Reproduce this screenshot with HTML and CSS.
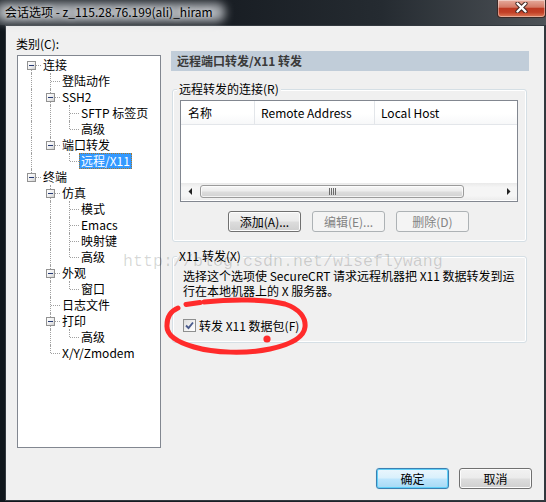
FILE: index.html
```html
<!DOCTYPE html>
<html lang="zh-CN">
<head>
<meta charset="utf-8">
<title>会话选项</title>
<link rel="stylesheet" href="styles.css">
</head>
<body>
<div class="window">
  <div class="titlebar">
    <div class="title">会话选项 - z_115.28.76.199(ali)_hiram</div>
    <div class="close">
      <svg width="13" height="11" viewBox="0 0 13 11"><path d="M2.5 1.5 L10.5 9.5 M10.5 1.5 L2.5 9.5" stroke="#3b2420" stroke-width="4.2" stroke-linecap="round" fill="none"/><path d="M2.5 1.5 L10.5 9.5 M10.5 1.5 L2.5 9.5" stroke="#fff" stroke-width="2.4" stroke-linecap="round" fill="none"/></svg>
    </div>
  </div>
  <div class="client">
    <div class="main">
      <div class="left">
        <div class="cat-label">类别(C):</div>
        <div class="tree">
          <div class="row"><span class="cell top"><i class="box"></i></span><span class="lbl">连接</span></div>
          <div class="row"><span class="cell pipe"></span><span class="cell tee"></span><span class="lbl">登陆动作</span></div>
          <div class="row"><span class="cell pipe"></span><span class="cell tee"><i class="box"></i></span><span class="lbl">SSH2</span></div>
          <div class="row"><span class="cell pipe"></span><span class="cell pipe"></span><span class="cell tee"></span><span class="lbl">SFTP 标签页</span></div>
          <div class="row"><span class="cell pipe"></span><span class="cell pipe"></span><span class="cell end"></span><span class="lbl">高级</span></div>
          <div class="row"><span class="cell pipe"></span><span class="cell end"><i class="box"></i></span><span class="lbl">端口转发</span></div>
          <div class="row"><span class="cell pipe"></span><span class="cell"></span><span class="cell end"></span><span class="lbl sel">远程/X11</span></div>
          <div class="row"><span class="cell end"><i class="box"></i></span><span class="lbl">终端</span></div>
          <div class="row"><span class="cell"></span><span class="cell tee"><i class="box"></i></span><span class="lbl">仿真</span></div>
          <div class="row"><span class="cell"></span><span class="cell pipe"></span><span class="cell tee"></span><span class="lbl">模式</span></div>
          <div class="row"><span class="cell"></span><span class="cell pipe"></span><span class="cell tee"></span><span class="lbl">Emacs</span></div>
          <div class="row"><span class="cell"></span><span class="cell pipe"></span><span class="cell tee"></span><span class="lbl">映射键</span></div>
          <div class="row"><span class="cell"></span><span class="cell pipe"></span><span class="cell end"></span><span class="lbl">高级</span></div>
          <div class="row"><span class="cell"></span><span class="cell tee"><i class="box"></i></span><span class="lbl">外观</span></div>
          <div class="row"><span class="cell"></span><span class="cell pipe"></span><span class="cell end"></span><span class="lbl">窗口</span></div>
          <div class="row"><span class="cell"></span><span class="cell tee"></span><span class="lbl">日志文件</span></div>
          <div class="row"><span class="cell"></span><span class="cell tee"><i class="box"></i></span><span class="lbl">打印</span></div>
          <div class="row"><span class="cell"></span><span class="cell pipe"></span><span class="cell end"></span><span class="lbl">高级</span></div>
          <div class="row"><span class="cell"></span><span class="cell end"></span><span class="lbl">X/Y/Zmodem</span></div>
        </div>
      </div>
      <div class="right">
        <div class="page-title">远程端口转发/X11 转发</div>
        <div class="group g1">
          <div class="legend">远程转发的连接(R)</div>
          <div class="listview">
            <div class="lv-header">
              <div class="col c1">名称</div>
              <div class="col c2">Remote Address</div>
              <div class="col c3">Local Host</div>
            </div>
            <div class="lv-body"></div>
            <div class="hscroll">
              <div class="sb-arrow"><svg width="4" height="7" viewBox="0 0 4 7"><path d="M4 0 L0.5 3.5 L4 7 Z" fill="#222"/></svg></div>
              <div class="sb-thumb">
                <svg width="7" height="7" viewBox="0 0 7 7"><path d="M0.5 0 V7 M2.5 0 V7 M4.5 0 V7 M6.5 0 V7" stroke="#6b6b6b" stroke-width="1"/></svg>
              </div>
              <div class="sb-track"></div>
              <div class="sb-arrow"><svg width="4" height="7" viewBox="0 0 4 7"><path d="M0 0 L3.5 3.5 L0 7 Z" fill="#222"/></svg></div>
            </div>
          </div>
          <div class="btn-row">
            <button class="btn">添加(A)...</button>
            <button class="btn disabled">编辑(E)...</button>
            <button class="btn disabled">删除(D)</button>
          </div>
        </div>
        <div class="group g2">
          <div class="legend">X11 转发(X)</div>
          <p class="desc">选择这个选项使 SecureCRT 请求远程机器把 X11 数据转发到运行在本地机器上的 X 服务器。</p>
          <label class="check"><span class="cb"><svg width="11" height="11" viewBox="0 0 11 11"><path d="M2 5.5 L4.5 8 L9 2.5" stroke="#4a5b8c" stroke-width="1.9" fill="none"/></svg></span>转发 X11 数据包(F)</label>
        </div>
      </div>
    </div>
    <div class="footer">
      <button class="btn default">确定</button>
      <button class="btn">取消</button>
    </div>
  </div>
  <div class="watermark">http://blog.csdn.net/wiseflywang</div>
  <svg class="annot" width="546" height="502" viewBox="0 0 546 502">
    <path d="M186 304.5 L200 302.5" stroke="#ff2b2b" stroke-width="5" stroke-linecap="round" fill="none"/>
    <path d="M204 302 C232 299 266 299 285 304 C300 309 306 318 305 327 C304 337 293 344 270 349 C246 354 214 353 194 347 C176 342 166 335 167 325 C167 317 171 311 178 308" stroke="#ff2b2b" stroke-width="5" stroke-linecap="round" fill="none"/>
    <circle cx="267" cy="339" r="3.6" fill="#ff2b2b"/>
  </svg>
</div>
</body>
</html>
```

FILE: styles.css
```css
* { box-sizing: border-box; }
html, body { margin: 0; padding: 0; }
body {
  width: 546px;
  height: 502px;
  overflow: hidden;
  background: #151b21;
  font-family: "Noto Sans CJK SC", "Noto Sans", sans-serif;
  font-size: 12px;
  color: #000;
}
.window {
  position: relative;
  width: 546px;
  height: 502px;
  display: flex;
  flex-direction: column;
  background: linear-gradient(90deg, #10161c 0%, #1d242b 60%, #30363c 100%);
}
.titlebar {
  height: 25px;
  flex: none;
  display: flex;
  justify-content: space-between;
  align-items: flex-start;
  background: linear-gradient(90deg, #262c32 0%, #181d23 40%, #252b31 70%, #4d5257 100%);
}
.title {
  position: relative;
  z-index: 0;
  height: 24px;
  line-height: 24px;
  padding: 0 14px 0 5px;
  white-space: nowrap;
  color: #000;
  text-shadow: 0 0 5px rgba(255,255,255,.8);
}
.title::before {
  content: "";
  position: absolute;
  left: -4px; right: 2px; top: 3px; bottom: 2px;
  z-index: -1;
  background: rgba(196,200,205,.85);
  border-radius: 8px;
  filter: blur(5px);
}
.close {
  width: 49px;
  height: 18px;
  border: 1px solid #3b2a27;
  border-top: none;
  border-radius: 0 0 4px 4px;
  background: linear-gradient(#e6ab9c 0%, #d47a66 42%, #bd3a22 50%, #c23f26 72%, #de7a57 100%);
  box-shadow: inset 0 0 0 1px rgba(255,255,255,.4);
  display: flex;
  justify-content: center;
  align-items: flex-start;
  padding-top: 2px;
}
.client {
  flex: 1;
  margin: 0 1px 1px 5px;
  border: 1px solid #33393f;
  background: #f0f0f0;
  display: flex;
  flex-direction: column;
}
.main {
  display: flex;
  padding: 10px 0 0 11px;
}
.left { width: 144px; flex: none; }
.cat-label { height: 19px; line-height: 15px; margin-left: -1px; }
.tree {
  height: 393px;
  border: 1px solid #828790;
  background: #fff;
  padding: 1px 0 0 4px;
}
.row { display: flex; height: 16px; }
.cell { position: relative; flex: none; width: 19px; height: 16px; }
.cell.pipe::before,
.cell.tee::before,
.cell.end::before,
.cell.top::before {
  content: "";
  position: absolute;
  left: 9px;
  top: 0;
  height: 16px;
  border-left: 1px dotted #a0a0a0;
}
.cell.end::before { height: 8px; }
.cell.top::before { top: 8px; height: 8px; }
.cell.tee::after,
.cell.end::after,
.cell.top::after {
  content: "";
  position: absolute;
  left: 10px;
  top: 8px;
  width: 9px;
  border-top: 1px dotted #a0a0a0;
}
.box {
  position: absolute;
  z-index: 1;
  left: 5px;
  top: 4px;
  width: 9px;
  height: 9px;
  border: 1px solid #929292;
  background: linear-gradient(135deg, #ffffff 0%, #eeeeee 55%, #cfcfcf 100%);
}
.box::after {
  content: "";
  position: absolute;
  left: 1px;
  top: 3px;
  width: 5px;
  height: 1px;
  background: #263a74;
}
.lbl {
  height: 16px;
  line-height: 14px;
  border: 1px solid transparent;
  padding: 0 1px;
  white-space: nowrap;
}
.lbl.sel {
  background: #3399ff;
  color: #fff;
  border: 1px dotted #a8782a;
}
.right { width: 358px; flex: none; margin-left: 10px; padding-top: 15px; }
.page-title {
  height: 20px;
  line-height: 20px;
  padding-left: 6px;
  background: #c1cdd9;
  font-weight: bold;
  color: #3a3a3a;
}
.group {
  margin-left: 1px;
  width: 355px;
  border: 1px solid #d5dfe5;
  border-radius: 3px;
  box-shadow: inset 0 0 0 1px #fff;
}
.legend {
  width: max-content;
  margin-top: -9px;
  padding: 0 2px;
  line-height: 15px;
  background: #f0f0f0;
}
.g1 { margin-top: 18px; padding: 0 0 9px 7px; }
.g1 .legend { margin-left: -3px; }
.listview {
  width: 338px;
  height: 102px;
  margin-top: 4px;
  border: 1px solid #828790;
  background: #fff;
  display: flex;
  flex-direction: column;
}
.lv-header {
  height: 24px;
  flex: none;
  display: flex;
  border-bottom: 1px solid #e3e6ea;
  background: linear-gradient(#ffffff 0%, #ffffff 55%, #f7f8f9 100%);
}
.col {
  height: 23px;
  line-height: 23px;
  padding-left: 6px;
  border-right: 1px solid #e3e6ea;
  white-space: nowrap;
}
.c1 { width: 74px; padding-left: 7px; }
.c2 { width: 120px; }
.c3 { flex: 1; border-right: none; }
.lv-body { flex: 1; }
.hscroll {
  height: 17px;
  flex: none;
  margin-bottom: 1px;
  display: flex;
  align-items: center;
  background: linear-gradient(#e9e9e9 0%, #f5f5f5 25%, #f5f5f5 75%, #ececec 100%);
}
.sb-arrow {
  width: 17px;
  height: 17px;
  flex: none;
  display: flex;
  align-items: center;
  justify-content: center;
}
.sb-thumb {
  width: 264px;
  height: 13px;
  flex: none;
  margin-left: 2px;
  border: 1px solid #9b9b9b;
  border-radius: 3px;
  background: linear-gradient(#f7f7f7 0%, #ececec 45%, #dcdcdc 55%, #d2d2d2 100%);
  box-shadow: inset 0 0 0 1px rgba(255,255,255,.7);
  display: flex;
  align-items: center;
  justify-content: center;
}
.sb-track { flex: 1; }
.btn-row { display: flex; gap: 11px; margin: 9px 0 0 48px; }
.btn {
  width: 73px;
  height: 21px;
  padding: 0;
  border: 1px solid #707070;
  border-radius: 3px;
  background: linear-gradient(#f2f2f2 0%, #ebebeb 48%, #dddddd 52%, #cfcfcf 100%);
  box-shadow: inset 0 0 0 1px #fcfcfc;
  font-family: "Noto Sans CJK SC", "Noto Sans", sans-serif;
  font-size: 12px;
  line-height: 17px;
  color: #000;
}
.btn.disabled {
  border-color: #adb2b5;
  background: #f4f4f4;
  box-shadow: none;
  color: #838383;
}
.btn.default {
  border-color: #3c7fb1;
  background: linear-gradient(#eaf6fd 0%, #d9f0fc 48%, #bee6fd 52%, #a7d9f5 100%);
  box-shadow: inset 0 0 0 1px #5fd0f8, 0 0 1px #8cd4f5;
}
.g2 { margin-top: 14px; padding: 0 0 9px 10px; }
.g2 .legend { margin-left: -6px; }
.desc { width: 337px; margin: 5px 0 0; line-height: 15px; }
.check {
  display: flex;
  align-items: center;
  height: 15px;
  margin-top: 20px;
}
.cb {
  width: 13px;
  height: 13px;
  flex: none;
  margin-right: 3px;
  border: 1px solid #8e8f8f;
  background: linear-gradient(135deg, #dcdcdc 0%, #f4f4f4 60%, #ffffff 100%);
  display: flex;
}
.footer {
  margin-top: auto;
  display: flex;
  justify-content: flex-end;
  gap: 10px;
  padding: 0 12px 11px 0;
}
.watermark {
  position: absolute;
  left: 123px;
  top: 252px;
  font-family: "Liberation Mono", monospace;
  font-size: 16.67px;
  line-height: 20px;
  color: rgba(0,0,0,.16);
  white-space: nowrap;
  pointer-events: none;
}
.annot {
  position: absolute;
  left: 0;
  top: 0;
  pointer-events: none;
}
```
